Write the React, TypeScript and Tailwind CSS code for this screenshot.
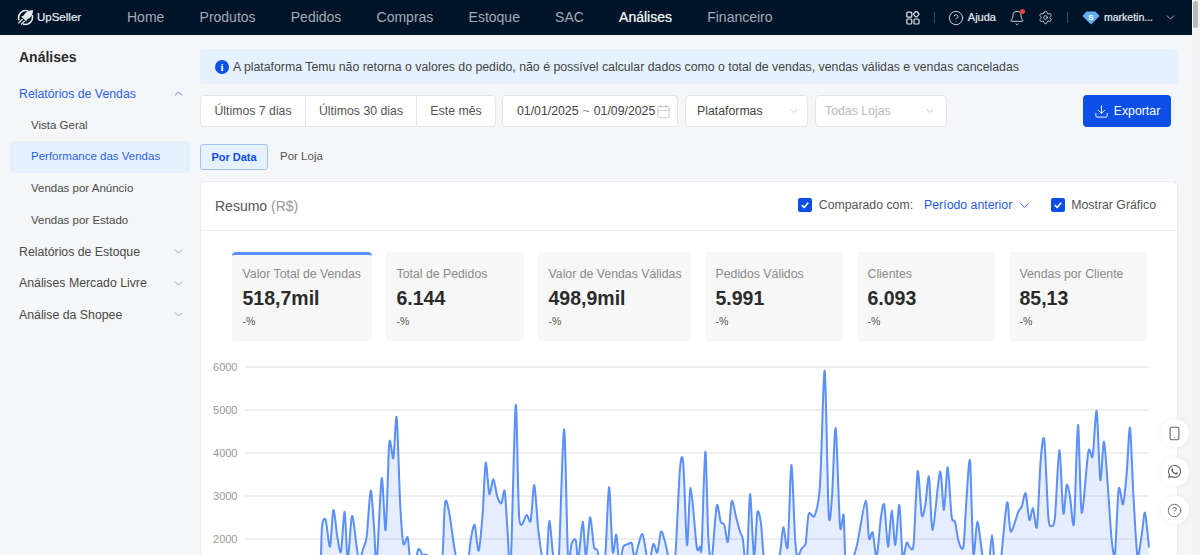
import { Bell, Calendar, ChevronDown, ChevronUp, CircleHelp, Download, Settings, Smartphone } from "lucide-react";
import { FaWhatsapp } from "react-icons/fa";

const NAV = ["Home", "Produtos", "Pedidos", "Compras", "Estoque", "SAC", "Análises", "Financeiro"];

const STATS = [
  { label: "Valor Total de Vendas", value: "518,7mil", width: "w-[140px]", active: true },
  { label: "Total de Pedidos", value: "6.144", width: "w-[138px]", active: false },
  { label: "Valor de Vendas Válidas", value: "498,9mil", width: "w-[153px]", active: false },
  { label: "Pedidos Válidos", value: "5.991", width: "w-[138px]", active: false },
  { label: "Clientes", value: "6.093", width: "w-[138px]", active: false },
  { label: "Vendas por Cliente", value: "85,13", width: "w-[138px]", active: false },
];

// traced from the chart, left half then right half
const LEFT: [number, number][] = [
  [362, 700], [366, 560], [377, 540], [390, 620], [400, 510], [412, 590], [423, 635], [434, 515], [443, 660], [456, 528],
  [470, 620], [478, 670], [488, 630], [500, 590], [512, 452], [522, 560], [530, 670], [545, 415], [557, 570], [568, 308],
  [580, 355], [590, 232], [600, 480], [610, 610], [623, 592], [630, 660], [640, 690], [655, 628], [668, 645], [680, 645],
  [700, 680], [725, 680], [735, 490], [748, 520], [770, 660], [800, 690], [812, 600], [824, 555], [836, 632], [848, 520],
  [857, 368], [868, 462], [880, 418], [892, 470], [904, 490], [914, 453], [922, 560], [932, 680], [947, 195], [958, 537],
  [980, 525], [992, 542], [1003, 435], [1015, 570], [1030, 670], [1040, 660], [1048, 542], [1060, 650], [1075, 690], [1092, 268],
  [1104, 650], [1115, 610], [1127, 600], [1135, 660], [1148, 545], [1158, 650], [1170, 532], [1182, 620], [1192, 630], [1200, 670],
  [1215, 660], [1227, 442], [1238, 635], [1249, 584], [1258, 670], [1270, 620], [1285, 612], [1295, 610], [1305, 650], [1327, 582],
  [1345, 670], [1360, 612], [1372, 637], [1383, 575], [1395, 605], [1410, 670], [1425, 660], [1440, 385], [1450, 373], [1461, 615],
  [1472, 443], [1490, 620],
];
const RIGHT: [number, number][] = [
  [0, 620], [5, 618], [16, 335], [25, 590], [35, 660], [50, 498], [62, 545], [73, 555], [84, 605], [95, 484],
  [108, 530], [120, 575], [128, 595], [140, 680], [150, 462], [162, 650], [172, 518], [183, 550], [195, 680], [225, 690],
  [240, 640], [250, 562], [263, 620], [274, 375], [285, 590], [292, 650], [305, 625], [317, 610], [326, 522], [344, 527],
  [360, 435], [374, 92], [386, 522], [396, 470], [407, 265], [420, 558], [431, 525], [437, 660], [460, 650], [473, 605],
  [497, 483], [507, 595], [518, 577], [530, 650], [543, 530], [553, 495], [564, 620], [575, 512], [586, 615], [598, 495],
  [608, 650], [620, 608], [630, 623], [641, 610], [653, 394], [665, 525], [676, 495], [687, 410], [698, 570], [720, 395],
  [732, 510], [743, 382], [755, 530], [765, 545], [776, 605], [790, 622], [798, 500], [810, 362], [820, 640], [832, 545],
  [845, 630], [855, 690], [866, 680], [876, 585], [885, 680], [900, 680], [921, 488], [932, 575], [955, 515], [965, 500],
  [977, 460], [988, 540], [999, 505], [1011, 560], [1022, 360], [1033, 300], [1045, 530], [1055, 558], [1065, 530], [1078, 330],
  [1090, 520], [1100, 435], [1110, 470], [1122, 550], [1134, 255], [1145, 518], [1165, 335], [1178, 348], [1190, 213], [1201, 420],
  [1212, 305], [1225, 460], [1235, 600], [1245, 640], [1256, 447], [1269, 493], [1280, 400], [1290, 263], [1300, 460], [1312, 645],
  [1325, 585], [1335, 518], [1347, 622],
];

const CHART_TOP = 350;
const POINTS: [number, number][] = [
  ...LEFT.map(([x, y]): [number, number] => [x / 3 + 200 - 201, y / 3 + 340 - CHART_TOP]),
  ...RIGHT.map(([x, y]): [number, number] => [x / 3 + 700 - 201, y / 3 + 340 - CHART_TOP]),
];

function smoothPath(pts: [number, number][]) {
  let d = `M${pts[0][0]} ${pts[0][1]}`;
  for (let i = 0; i < pts.length - 1; i++) {
    const p0 = pts[Math.max(0, i - 1)];
    const p1 = pts[i];
    const p2 = pts[i + 1];
    const p3 = pts[Math.min(pts.length - 1, i + 2)];
    const k = 0.14;
    d += ` C${(p1[0] + (p2[0] - p0[0]) * k).toFixed(1)} ${(p1[1] + (p2[1] - p0[1]) * k).toFixed(1)} ${(p2[0] - (p3[0] - p1[0]) * k).toFixed(1)} ${(p2[1] - (p3[1] - p1[1]) * k).toFixed(1)} ${p2[0].toFixed(1)} ${p2[1].toFixed(1)}`;
  }
  return d;
}

function Logo() {
  return (
    <svg width="17" height="17" viewBox="0 0 18 18" fill="none">
      <path d="M12 2.2 A7.6 7.6 0 0 0 2.2 12" stroke="#e8ebef" strokeWidth="1.7" />
      <path d="M16 6.4 A7.6 7.6 0 0 1 6.4 16" stroke="#e8ebef" strokeWidth="1.7" />
      <path d="M17 1 C12.4 1.2 9 3.2 6.8 7.2 L4.4 8 L9.8 13.2 L10.8 11 C14.8 9.4 16.8 6 17 1Z" fill="#e8ebef" />
      <path d="M1.5 15 L6 10.6 M4.4 16.4 L8.2 12.6" stroke="#e8ebef" strokeWidth="1.4" />
    </svg>
  );
}

function AppsIcon() {
  return (
    <svg width="14" height="14" viewBox="0 0 14 14" fill="none" stroke="#dfe5ec" strokeWidth="1.2">
      <rect x="0.8" y="1.2" width="5" height="5" rx="1" />
      <rect x="0.8" y="8" width="5" height="5" rx="1" />
      <rect x="8" y="8" width="5" height="5" rx="1" />
      <rect x="8" y="1" width="4.4" height="4.4" rx="1" transform="rotate(45 10.2 3.2)" />
    </svg>
  );
}

function Gem() {
  return (
    <svg width="18" height="14" viewBox="0 0 18 14">
      <path d="M4.6 0.5 H13.4 L17.6 5 L9 13.6 L0.4 5Z" fill="#61b0f5" />
      <text x="9" y="9" textAnchor="middle" fontSize="8" fontWeight="700" fill="#fff" fontFamily="Liberation Sans, sans-serif">S</text>
    </svg>
  );
}

function Check() {
  return (
    <span className="flex h-[14px] w-[14px] items-center justify-center rounded-[2px] bg-[#0b4fe6]">
      <svg width="10" height="10" viewBox="0 0 10 10" fill="none" stroke="#fff" strokeWidth="1.6">
        <path d="M1.8 5.2 L4.2 7.4 L8.2 2.8" />
      </svg>
    </span>
  );
}

function Chart() {
  const line = smoothPath(POINTS);
  const lastX = POINTS[POINTS.length - 1][0];
  const area = `${line} L${lastX} 300 L${POINTS[0][0]} 300Z`;
  const ticks = [
    { label: "6000", y: 17 },
    { label: "5000", y: 60 },
    { label: "4000", y: 103 },
    { label: "3000", y: 146 },
    { label: "2000", y: 189 },
  ];
  return (
    <svg width="976" height="210" viewBox="0 0 976 210" className="mt-[9px] block">
      {ticks.map((t) => (
        <g key={t.label}>
          <line x1="44" x2="948" y1={t.y} y2={t.y} stroke="#e8e8ea" strokeWidth="1.3" />
          <text x="36.5" y={t.y + 4} textAnchor="end" fontSize="11" fill="#999" fontFamily="Liberation Sans, sans-serif">
            {t.label}
          </text>
        </g>
      ))}
      <path d={area} fill="#5b8ff9" fillOpacity="0.16" />
      <path d={line} fill="none" stroke="#5b8ff9" strokeWidth="2" strokeLinejoin="round" />
    </svg>
  );
}

function SideItem({ label, active, sub }: { label: string; active?: boolean; sub?: boolean }) {
  return (
    <div
      className={`flex h-[31.6px] items-center rounded-[4px] ${sub ? "pl-[21px] text-[11.5px]" : "justify-between pl-[9px] pr-[5px] text-[12.3px]"} ${active && sub ? "bg-[#e6f1ff]" : ""} ${active ? "text-[#2a62e8]" : "text-[#4a4a4a]"}`}
    >
      <span>{label}</span>
      {!sub &&
        (active ? (
          <ChevronUp size={13} strokeWidth={1.4} className="text-[#2a62e8]" />
        ) : (
          <ChevronDown size={13} strokeWidth={1.4} className="text-[#8c8c8c]" />
        ))}
    </div>
  );
}

function SideFloat({ children }: { children: React.ReactNode }) {
  return (
    <div className="flex h-7 w-7 items-center justify-center rounded-full bg-white text-[#666] shadow-[0_0_6px_rgba(0,0,0,0.06)]">
      {children}
    </div>
  );
}

export default function App() {
  return (
    <div className="relative flex h-[555px] w-[1200px] overflow-hidden bg-[#f5f6f8] font-['Liberation_Sans',Arial,sans-serif]">
      <div className="flex min-w-0 flex-1 flex-col">
        {/* top bar */}
        <header className="flex h-[35px] flex-none items-center bg-[#001429] text-white">
          <div className="flex w-[127px] flex-none items-center gap-[3px] pl-[17px]">
            <Logo />
            <span className="text-[11.5px] text-[#e8ebef] [-webkit-text-stroke:0.2px_#e8ebef]">UpSeller</span>
          </div>
          <nav className="flex gap-[35.2px] text-[14px] text-[#a3abb5]">
            {NAV.map((n) => (
              <span key={n} className={n === "Análises" ? "text-white [-webkit-text-stroke:0.2px_white]" : ""}>
                {n}
              </span>
            ))}
          </nav>
          <div className="ml-auto flex items-center pr-[15px]">
            <AppsIcon />
            <span className="ml-[14px] mr-[13px] h-[11px] w-px bg-[#3b4a5c]" />
            <CircleHelp size={16} strokeWidth={1.3} className="text-[#e8ebef]" />
            <span className="ml-[4px] text-[11px] text-[#e8ebef] [-webkit-text-stroke:0.2px_#e8ebef]">Ajuda</span>
            <span className="relative ml-[13px]">
              <Bell size={16} strokeWidth={1.3} className="text-[#e8ebef]" />
              <span className="absolute right-0 top-[-1px] h-[5px] w-[5px] rounded-full bg-[#f0403c]" />
            </span>
            <Settings size={15} strokeWidth={1.3} className="ml-[13px] text-[#e8ebef]" />
            <span className="mx-[14px] h-[11px] w-px bg-[#3b4a5c]" />
            <Gem />
            <span className="ml-[4px] text-[10.5px] text-[#e8ebef] [-webkit-text-stroke:0.2px_#e8ebef]">marketin...</span>
            <ChevronDown size={13} strokeWidth={1.4} className="ml-[11px] text-[#cfd5dc]" />
          </div>
        </header>

        <div className="flex min-h-0 flex-1">
          {/* sidebar */}
          <aside className="w-[200px] flex-none pl-[10px] pr-[10px]">
            <div className="pb-[10px] pl-[9px] pt-[14px] text-[14px] font-bold leading-4 text-[#2b2b2b]">Análises</div>
            <div className="mt-[3px] flex flex-col">
              <SideItem label="Relatórios de Vendas" active />
              <SideItem label="Vista Geral" sub />
              <SideItem label="Performance das Vendas" sub active />
              <SideItem label="Vendas por Anúncio" sub />
              <SideItem label="Vendas por Estado" sub />
              <SideItem label="Relatórios de Estoque" />
              <SideItem label="Análises Mercado Livre" />
              <SideItem label="Análise da Shopee" />
            </div>
          </aside>

          {/* content */}
          <main className="min-w-0 flex-1 pr-[14px] pt-[14px]">
            <div className="flex h-[35px] items-center gap-[4px] rounded-[4px] bg-[#e6f1ff] pl-[15px] pt-px text-[12.3px] text-[#444]">
              <span className="flex h-[14px] w-[14px] items-center justify-center rounded-full bg-[#0b4fe6] font-['Liberation_Serif',serif] text-[11px] font-bold text-white">
                i
              </span>
              A plataforma Temu não retorna o valores do pedido, não é possível calcular dados como o total de vendas, vendas válidas e vendas canceladas
            </div>

            <div className="mt-[11px] flex items-center text-[12.3px]">
              <div className="flex h-8 items-center rounded-[4px] border border-[#e3e5e8] bg-white text-[#555]">
                <span className="flex h-full w-[105px] items-center justify-center border-r border-[#e3e5e8]">Últimos 7 dias</span>
                <span className="flex h-full w-[111px] items-center justify-center border-r border-[#e3e5e8]">Últimos 30 dias</span>
                <span className="flex h-full w-[78px] items-center justify-center">Este mês</span>
              </div>
              <div className="ml-[6px] flex h-8 w-[176px] items-center rounded-[4px] border border-[#e3e5e8] bg-white pl-[14px] text-[#444]">
                <span>01/01/2025</span>
                <span className="mx-[4px] text-[#888]">~</span>
                <span>01/09/2025</span>
                <Calendar size={15} strokeWidth={1} className="ml-px text-[#aaa]" />
              </div>
              <div className="ml-[7px] flex h-8 w-[123px] items-center justify-between rounded-[4px] border border-[#e3e5e8] bg-white pl-[11px] pr-[7px] text-[#444]">
                Plataformas
                <ChevronDown size={12} strokeWidth={1.2} className="text-[#aaa]" />
              </div>
              <div className="ml-[7px] flex h-8 w-[132px] items-center justify-between rounded-[4px] border border-[#e3e5e8] bg-white pl-[9px] pr-[10px] text-[#bbb]">
                Todas Lojas
                <ChevronDown size={12} strokeWidth={1.2} className="text-[#999]" />
              </div>
              <button className="ml-auto mr-[7px] flex h-8 w-[88px] items-center justify-center gap-[5px] rounded-[4px] bg-[#0b4fe6] text-[12.3px] text-white">
                <Download size={15} strokeWidth={1.5} />
                Exportar
              </button>
            </div>

            <div className="mt-[17px] flex items-center text-[11px]">
              <span className="flex h-[26px] w-[68px] items-center justify-center rounded-[3px] border border-[#9ec3f7] bg-[#e6f1ff] font-bold text-[#0b4fe6]">
                Por Data
              </span>
              <span className="ml-[12px] text-[11.5px] text-[#555]">Por Loja</span>
            </div>

            <section className="mt-[11px] rounded-t-[6px] border border-b-0 border-[#e9ebee] bg-white">
              <div className="flex h-[49px] items-center border-b border-[#eceef0] pl-[14px] pr-[21px]">
                <span className="text-[14px] text-[#555]">
                  Resumo <span className="text-[#999]">(R$)</span>
                </span>
                <div className="ml-auto flex items-center pb-[2px] text-[12.3px] text-[#555]">
                  <Check />
                  <span className="ml-[7px]">Comparado com:</span>
                  <span className="ml-[11px] text-[#1f5ae8]">Período anterior</span>
                  <ChevronDown size={15} strokeWidth={1.5} className="ml-[5px] text-[#1f5ae8]" />
                  <span className="ml-[19px]"><Check /></span>
                  <span className="ml-[6px]">Mostrar Gráfico</span>
                </div>
              </div>
              <div className="flex gap-[14px] pl-[31px] pt-[21px]">
                {STATS.map((s) => (
                  <div
                    key={s.label}
                    className={`h-[89px] flex-none rounded-[4px] bg-[#f7f7f7] pl-[10.5px] ${s.width} ${s.active ? "border-t-[3px] border-[#5b8ff9] pt-[12px]" : "pt-[15px]"}`}
                  >
                    <div className="text-[12.3px] leading-[14px] text-[#8a8a8a]">{s.label}</div>
                    <div className="mt-[6px] text-[19.5px] font-bold leading-[22px] text-[#2b2b2b]">{s.value}</div>
                    <div className="mt-[6px] text-[10.5px] leading-3 text-[#555]">-%</div>
                  </div>
                ))}
              </div>
              <Chart />
            </section>
          </main>
        </div>
      </div>

      {/* scrollbar */}
      <div className="w-2 flex-none bg-[#f3f3f3] pl-px pt-px">
        <div className="h-[27px] w-[5px] rounded-[3px] bg-[#b9b9b9]" />
      </div>

      {/* floating help buttons */}
      <div className="absolute right-[11.5px] top-[419px] flex flex-col gap-[10.5px]">
        <SideFloat>
          <Smartphone size={15} strokeWidth={1.7} />
        </SideFloat>
        <SideFloat>
          <FaWhatsapp size={15} />
        </SideFloat>
        <SideFloat>
          <CircleHelp size={15} strokeWidth={1.5} />
        </SideFloat>
      </div>
    </div>
  );
}
